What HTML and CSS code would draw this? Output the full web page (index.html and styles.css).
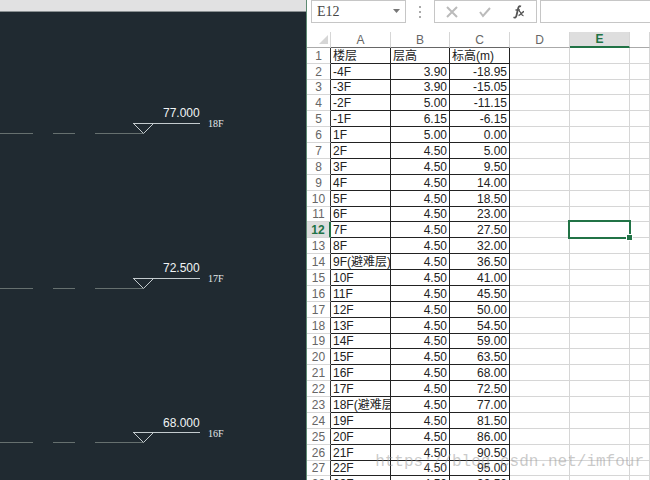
FILE: index.html
```html
<!DOCTYPE html>
<html lang="zh-CN">
<head>
    <meta charset="UTF-8">
    <meta name="viewport" content="width=device-width, initial-scale=1.0">
    <link rel="stylesheet" href="styles.css">
    <title>楼层标高</title>
</head>
<body>
    <div class="drawing">
        <div class="drawing-bar"></div>
        <svg class="canvas" width="306" height="468">
            <defs>
                <g id="level" fill="none">
                    <path class="axis" d="M0 121.5H33M53 121.5H75M95 121.5H143"/>
                    <path class="mark" d="M133 111.5H200"/>
                    <path class="mark" d="M133.5 111.5L143.5 121.5L153.5 111.5"/>
                </g>
            </defs>
            <use href="#level"/>
            <text class="height" x="163" y="105">77.000</text>
            <text class="floor" x="208" y="115">18F</text>
            <use href="#level" y="155"/>
            <text class="height" x="163" y="260">72.500</text>
            <text class="floor" x="208" y="270">17F</text>
            <use href="#level" y="309"/>
            <text class="height" x="163" y="415">68.000</text>
            <text class="floor" x="208" y="425">16F</text>
        </svg>
    </div>
    <div class="sheet">
        <div class="formula-bar">
            <div class="name-box">
                <input type="text" value="E12" aria-label="名称框">
                <button aria-label="展开"><svg width="8" height="5"><path d="M1 0H8L4.500 4Z" fill="#777"/></svg></button>
            </div>
            <svg class="dots" width="2" height="12" fill="#aaa"><path d="M0 0h2v2H0zM0 5h2v2H0zM0 10h2v2H0z"/></svg>
            <div class="tools">
                <button aria-label="取消"><svg width="12" height="12" fill="none" stroke="#bbb" stroke-width="2"><path d="M1 1L11 11M11 1L1 11"/></svg></button>
                <button aria-label="输入"><svg width="12" height="12" fill="none" stroke="#bbb" stroke-width="2"><path d="M1 6L4 10L11 2"/></svg></button>
                <button aria-label="插入函数"><svg width="12" height="14" fill="none" stroke="#555"><path stroke-width="1.800" d="M8 1.500C6 0.500 5.500 2 5 4L3.500 10.500C3 12.500 2 13 0.500 12.300"/><path stroke-width="1.300" d="M2.500 5H7M6 6.500C8 6 8 11 10.500 10.500M11 6.500C9.500 6.500 7.500 10.500 5.500 10.500"/></svg></button>
            </div>
            <input class="formula" type="text" aria-label="编辑栏">
        </div>
        <table>
            <colgroup><col class="num"><col class="col"><col class="col-b"><col class="col"><col class="col"><col class="col"><col></colgroup>
            <thead>
                <tr><th><svg class="corner" width="9" height="9"><path d="M9 0V9H0Z" fill="#d6d6d6"/></svg></th><th>A</th><th>B</th><th>C</th><th>D</th><th class="active">E</th><th></th></tr>
            </thead>
            <tbody>
                <tr><th>1</th><td>楼层</td><td class="text">层高</td><td class="text">标高(m)</td><td></td><td></td><td></td></tr>
                <tr><th>2</th><td>-4F</td><td>3.90</td><td>-18.95</td><td></td><td></td><td></td></tr>
                <tr><th>3</th><td>-3F</td><td>3.90</td><td>-15.05</td><td></td><td></td><td></td></tr>
                <tr><th>4</th><td>-2F</td><td>5.00</td><td>-11.15</td><td></td><td></td><td></td></tr>
                <tr><th>5</th><td>-1F</td><td>6.15</td><td>-6.15</td><td></td><td></td><td></td></tr>
                <tr><th>6</th><td>1F</td><td>5.00</td><td>0.00</td><td></td><td></td><td></td></tr>
                <tr><th>7</th><td>2F</td><td>4.50</td><td>5.00</td><td></td><td></td><td></td></tr>
                <tr><th>8</th><td>3F</td><td>4.50</td><td>9.50</td><td></td><td></td><td></td></tr>
                <tr><th>9</th><td>4F</td><td>4.50</td><td>14.00</td><td></td><td></td><td></td></tr>
                <tr><th>10</th><td>5F</td><td>4.50</td><td>18.50</td><td></td><td></td><td></td></tr>
                <tr><th>11</th><td>6F</td><td>4.50</td><td>23.00</td><td></td><td></td><td></td></tr>
                <tr><th class="active">12</th><td>7F</td><td>4.50</td><td>27.50</td><td></td><td class="selected"></td><td></td></tr>
                <tr><th>13</th><td>8F</td><td>4.50</td><td>32.00</td><td></td><td></td><td></td></tr>
                <tr><th>14</th><td>9F(避难层)</td><td>4.50</td><td>36.50</td><td></td><td></td><td></td></tr>
                <tr><th>15</th><td>10F</td><td>4.50</td><td>41.00</td><td></td><td></td><td></td></tr>
                <tr><th>16</th><td>11F</td><td>4.50</td><td>45.50</td><td></td><td></td><td></td></tr>
                <tr><th>17</th><td>12F</td><td>4.50</td><td>50.00</td><td></td><td></td><td></td></tr>
                <tr><th>18</th><td>13F</td><td>4.50</td><td>54.50</td><td></td><td></td><td></td></tr>
                <tr><th>19</th><td>14F</td><td>4.50</td><td>59.00</td><td></td><td></td><td></td></tr>
                <tr><th>20</th><td>15F</td><td>4.50</td><td>63.50</td><td></td><td></td><td></td></tr>
                <tr><th>21</th><td>16F</td><td>4.50</td><td>68.00</td><td></td><td></td><td></td></tr>
                <tr><th>22</th><td>17F</td><td>4.50</td><td>72.50</td><td></td><td></td><td></td></tr>
                <tr><th>23</th><td>18F(避难层)</td><td>4.50</td><td>77.00</td><td></td><td></td><td></td></tr>
                <tr><th>24</th><td>19F</td><td>4.50</td><td>81.50</td><td></td><td></td><td></td></tr>
                <tr><th>25</th><td>20F</td><td>4.50</td><td>86.00</td><td></td><td></td><td></td></tr>
                <tr><th>26</th><td>21F</td><td>4.50</td><td>90.50</td><td></td><td></td><td></td></tr>
                <tr><th>27</th><td>22F</td><td>4.50</td><td>95.00</td><td></td><td></td><td></td></tr>
                <tr><th>28</th><td>23F</td><td>4.50</td><td>99.50</td><td></td><td></td><td></td></tr>
            </tbody>
        </table>
    </div>
    <div class="watermark">https://blog.csdn.net/imfour</div>
</body>
</html>
```
FILE: styles.css
```css
* {
    box-sizing: border-box;
}

body {
    display: grid;
    grid-template-columns: 306px 1fr;
    position: relative;
    height: 100vh;
    margin: 0;
    overflow: hidden;
    background-color: #fff;
    font-family: "Liberation Sans", "Noto Sans CJK SC", sans-serif;
    font-size: 12px;
}

button, input {
    margin: 0;
    padding: 0;
    border: none;
    background: none;
}

/* left: drawing */
.drawing {
    background-color: #202a31;
    overflow: hidden;
}

.drawing-bar {
    height: 12px;
    background-color: #e1e1e2;
    border-bottom: 1px solid #8a9092;
}

.canvas {
    display: block;
}

.axis {
    stroke: #66706f;
}

.mark {
    stroke: #c3cbce;
}

.height {
    fill: #f0f4f5;
    font-size: 12px;
}

.floor {
    fill: #e4e8ea;
    font-family: "Liberation Serif", serif;
    font-size: 10px;
}

/* right: sheet */
.sheet {
    min-width: 0;
    height: 100vh;
    overflow: hidden;
    border-left: 1px solid #5d8a72;
}

.formula-bar {
    display: flex;
    align-items: center;
    height: 23px;
    margin-bottom: 9px;
    padding-left: 4px;
}

.name-box, .tools, .formula {
    display: flex;
    align-items: center;
    height: 23px;
    border: 1px solid #c6c6c6;
}

.name-box {
    width: 95px;
    padding: 0 5px;
}

.name-box input {
    flex: 1;
    min-width: 0;
    color: #444;
    font-family: "Liberation Serif", serif;
    font-size: 14px;
}

.name-box button {
    display: flex;
}

.dots {
    margin: 0 13px;
}

.tools {
    width: 103px;
    justify-content: space-around;
}

.tools button {
    display: flex;
}

.formula {
    flex: 1;
    min-width: 0;
    margin-left: 3px;
    padding: 0 4px;
    border-right: none;
}

table {
    width: 100%;
    table-layout: fixed;
    border-collapse: separate;
    border-spacing: 0;
}

.num {
    width: 24px;
}

.col {
    width: 60px;
}

.col-b {
    width: 59px;
}

tr {
    height: 16px;
}

tbody tr:nth-child(8n+3) {
    height: 15px;
}

th, td {
    padding: 0 2px;
    border-right: 1px solid #d6d6d6;
    border-bottom: 1px solid #d6d6d6;
    line-height: 14px;
    white-space: nowrap;
    overflow: hidden;
}

th {
    padding: 0;
    color: #666;
    font-weight: normal;
    text-align: center;
}

thead th {
    border-bottom-color: #aaa;
}

thead th:nth-child(2), thead th:nth-child(3), thead th:nth-child(4) {
    border-bottom-color: #666;
}

.corner {
    display: block;
    margin-left: 12px;
}

tbody th {
    border-right-color: #333;
}

td:nth-child(2), td:nth-child(3), td:nth-child(4) {
    border-color: #222;
    color: #222;
}

td:nth-child(3), td:nth-child(4) {
    text-align: right;
}

td.text {
    text-align: left;
}

th.active {
    background-color: #dedede;
    color: #217346;
    font-weight: bold;
}

thead th.active {
    border-bottom: 2px solid #217346;
}

tbody th.active {
    border-right: 2px solid #217346;
}

.selected {
    position: relative;
    overflow: visible;
}

.selected::before {
    content: "";
    position: absolute;
    inset: -2px;
    border: 2px solid #217346;
}

.selected::after {
    content: "";
    position: absolute;
    right: -3px;
    bottom: -3px;
    width: 5px;
    height: 5px;
    background-color: #217346;
    outline: 1px solid #fff;
}

.watermark {
    position: absolute;
    right: 6px;
    bottom: 8px;
    color: rgba(150, 150, 150, 0.5);
    font-family: "Liberation Mono", monospace;
    font-size: 16px;
    line-height: 20px;
}
```
